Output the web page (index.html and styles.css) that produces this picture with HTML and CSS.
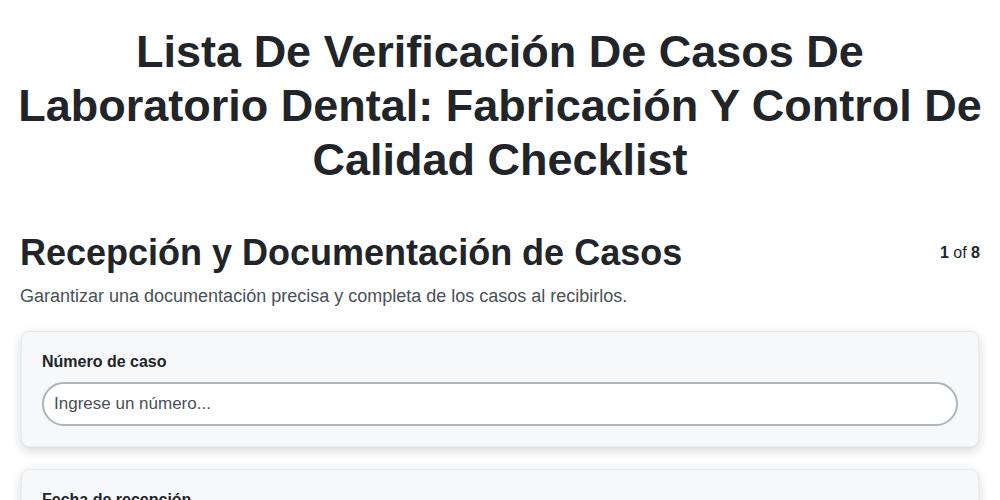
FILE: index.html
```html
<!DOCTYPE html>
<html lang="es">
<head>
<meta charset="utf-8">
<title>Checklist</title>
<link rel="stylesheet" href="styles.css">
</head>
<body>
<div class="page">
  <h1 class="title">Lista De Verificación De Casos De Laboratorio Dental: Fabricación Y Control De Calidad Checklist</h1>
  <div class="section-head">
    <h2 class="section-title">Recepción y Documentación de Casos</h2>
    <div class="counter"><b>1</b> of <b>8</b></div>
  </div>
  <p class="section-desc">Garantizar una documentación precisa y completa de los casos al recibirlos.</p>
  <div class="cards">
    <div class="card">
      <label class="card-label" for="caso">Número de caso</label>
      <input class="card-input" id="caso" type="text" placeholder="Ingrese un número...">
    </div>
    <div class="card">
      <label class="card-label" for="fecha">Fecha de recepción</label>
      <input class="card-input" id="fecha" type="text" placeholder="Seleccione una fecha...">
    </div>
  </div>
</div>
</body>
</html>
```
FILE: styles.css
```css
html, body {
  margin: 0;
  padding: 0;
  background: #ffffff;
}
body {
  font-family: "Liberation Sans", Arial, sans-serif;
  color: #212529;
}
.page {
  padding: 0 20px;
}
.title {
  margin: 25px -12px 44px;
  font-size: 45px;
  line-height: 54px;
  font-weight: 700;
  text-align: center;
  color: #212529;
}
.section-head {
  display: flex;
  justify-content: space-between;
  align-items: center;
}
.section-title {
  margin: 0;
  font-size: 36px;
  line-height: 1.2;
  font-weight: 700;
  color: #212529;
}
.counter {
  font-size: 16px;
  color: #212529;
}
.section-desc {
  margin: 9px 0 21px;
  font-size: 18px;
  line-height: 27px;
  color: #495057;
}
.cards {
  display: flex;
  flex-direction: column;
  gap: 22px;
}
.card {
  display: flex;
  flex-direction: column;
  gap: 11px;
  margin: 0 1px;
  padding: 20px 20px 20px;
  background: #f7f8fa;
  border: 1px solid #e6e8ec;
  border-radius: 8px;
  box-shadow: 0 4px 12px rgba(0, 0, 0, 0.16);
}
.card-label {
  font-size: 16px;
  line-height: 1.2;
  font-weight: 700;
  color: #212529;
}
.card-input {
  box-sizing: border-box;
  width: 100%;
  height: 44px;
  padding: 0 10px;
  font-family: "Liberation Sans", Arial, sans-serif;
  font-size: 17px;
  color: #212529;
  background: #ffffff;
  border: 2px solid #adb5bd;
  border-radius: 999px;
  outline: none;
}
.card-input::placeholder {
  color: #495057;
  opacity: 1;
}
```
